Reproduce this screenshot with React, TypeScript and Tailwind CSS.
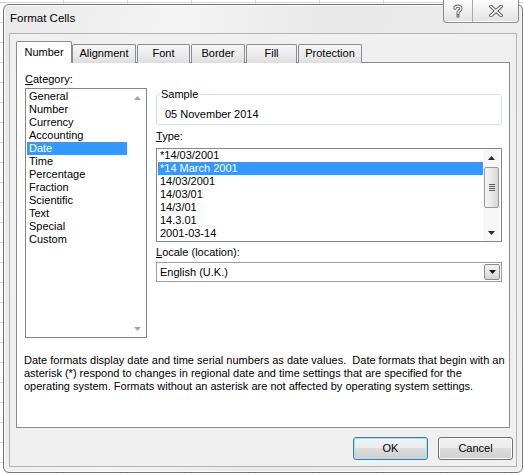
import React from "react";

// Win7 style "Format Cells" dialog
const categories = [
  "General",
  "Number",
  "Currency",
  "Accounting",
  "Date",
  "Time",
  "Percentage",
  "Fraction",
  "Scientific",
  "Text",
  "Special",
  "Custom",
];

const dateTypes = [
  "*14/03/2001",
  "*14 March 2001",
  "14/03/2001",
  "14/03/01",
  "14/3/01",
  "14.3.01",
  "2001-03-14",
];

const tabs = [
  { label: "Alignment", cls: "w-[64px] ml-0" },
  { label: "Font", cls: "w-[53px] ml-[1px]" },
  { label: "Border", cls: "w-[54px] ml-[1px]" },
  { label: "Fill", cls: "w-[51px] ml-[1px]" },
  { label: "Protection", cls: "w-[64px] ml-[1px]" },
];

function Arrow({ up, color }: { up?: boolean; color: string }) {
  return (
    <svg width="7" height="4" viewBox="0 0 7 4">
      {up ? (
        <path d="M3.5 0 L7 4 L0 4 Z" fill={color} />
      ) : (
        <path d="M0 0 L7 0 L3.5 4 Z" fill={color} />
      )}
    </svg>
  );
}

function CaptionButtons() {
  return (
    <div className="absolute left-[439px] top-[-5px] flex h-[23px] w-[76px] rounded-b-[4px] border border-t-0 border-[#8c8c8c] bg-[linear-gradient(#fdfdfd,#ececec_60%,#e2e2e2)] shadow-[inset_0_-1px_0_#ffffff]">
      <div className="flex w-[29px] items-center justify-center border-r border-[#a9a9a9]">
        <svg width="10" height="14" viewBox="0 0 10 14">
          <path
            d="M2 4.2 C2 1.6 8 1.4 8 4.4 C8 6.6 5 6.6 5 8.8 L5 9.6"
            fill="none"
            stroke="#5a5a5a"
            strokeWidth="3.2"
            strokeLinecap="round"
          />
          <path
            d="M2 4.2 C2 1.6 8 1.4 8 4.4 C8 6.6 5 6.6 5 8.8 L5 9.6"
            fill="none"
            stroke="#ffffff"
            strokeWidth="1.4"
            strokeLinecap="round"
          />
          <circle cx="5" cy="12" r="1.7" fill="#5a5a5a" />
          <circle cx="5" cy="12" r="0.7" fill="#ffffff" />
        </svg>
      </div>
      <div className="flex flex-1 items-center justify-center">
        <svg width="14" height="12" viewBox="0 0 14 12">
          <path d="M2 1.5 L12 10.5 M12 1.5 L2 10.5" stroke="#5a5a5a" strokeWidth="3.6" strokeLinecap="square" />
          <path d="M2 1.5 L12 10.5 M12 1.5 L2 10.5" stroke="#ffffff" strokeWidth="1.6" strokeLinecap="square" />
        </svg>
      </div>
    </div>
  );
}

export default function App() {
  return (
    <div className="relative h-[474px] w-[523px] overflow-hidden bg-white bg-[linear-gradient(to_right,#d6d6d6_1px,transparent_1px),linear-gradient(to_bottom,#d6d6d6_1px,transparent_1px)] bg-[length:64px_20px] bg-[position:63px_2px] font-['Liberation_Sans',Arial,sans-serif] text-[11px] text-black">
      {/* dialog window */}
      <div className="absolute left-[3px] top-[4px] h-[469px] w-[520px] rounded-[6px] border border-[#737373] bg-[linear-gradient(100deg,#e9e9e9,#f4f4f4_30%,#e8e8e8_55%,#efefef)] shadow-[inset_0_0_0_1px_#fafafa]">
        <CaptionButtons />

        {/* title bar */}
        <div className="h-[28px] pl-[6px] pt-[6px] text-[11.5px] leading-[14px]">Format Cells</div>

        {/* client area */}
        <div className="mx-[5px] h-[434px] border border-[#b4b4b4] bg-[#f0f0f0]">
          {/* tabs */}
          <div className="mb-[-1px] mt-[7px] flex h-[22px] items-end pl-[6px]">
            <div className="relative z-10 flex h-[22px] w-[56px] items-center justify-center rounded-t-[2px] border border-b-0 border-[#898c95] bg-white pb-[1px]">
              Number
            </div>
            {tabs.map((t) => (
              <div
                key={t.label}
                className={`flex h-[19px] items-center justify-center rounded-t-[2px] border border-b-0 border-[#898c95] bg-[linear-gradient(#f6f6f6,#ececec_50%,#dedede)] pb-[1px] ${t.cls}`}
              >
                {t.label}
              </div>
            ))}
          </div>

          {/* tab page */}
          <div className="ml-[6px] h-[366px] w-[494px] border border-[#898c95] bg-white pl-[8px] pt-[8px]">
            <div className="flex">
              {/* category */}
              <div className="w-[122px]">
                <div className="h-[17px] leading-[17px]">
                  <span className="underline">C</span>ategory:
                </div>
                <div className="flex h-[250px] border border-[#828790]">
                  <div className="w-[101px] pl-[1px] pt-[1px]">
                    {categories.map((c) => (
                      <div
                        key={c}
                        className={`h-[13px] px-[2px] leading-[13px] ${c === "Date" ? "bg-[#3399ff] text-white" : ""}`}
                      >
                        {c}
                      </div>
                    ))}
                  </div>
                  <div className="ml-[1px] flex flex-1 flex-col justify-between">
                    <div className="flex h-[17px] items-center justify-center">
                      <Arrow up color="#a3a3a3" />
                    </div>
                    <div className="flex h-[17px] items-center justify-center">
                      <Arrow color="#a3a3a3" />
                    </div>
                  </div>
                </div>
              </div>

              {/* right column */}
              <div className="ml-[9px] w-[346px] pt-[17px]">
                <fieldset className="rounded-[3px] border border-[#d5dfe5] pb-[3px] pl-[3px]">
                  <legend className="px-[1px] leading-[13px]">Sample</legend>
                  <div className="ml-[5px] mt-[7px] leading-[13px]">05 November 2014</div>
                </fieldset>

                <div className="h-[23px] leading-[23px]">
                  <span className="underline">T</span>ype:
                </div>
                <div className="flex h-[94px] border border-[#828790]">
                  <div className="w-[326px] pl-[1px]">
                    {dateTypes.map((d) => (
                      <div
                        key={d}
                        className={`h-[13px] px-[2px] leading-[13px] ${d === "*14 March 2001" ? "bg-[#3399ff] text-white" : ""}`}
                      >
                        {d}
                      </div>
                    ))}
                  </div>
                  <div className="flex w-[17px] flex-col bg-[#f7f7f7]">
                    <div className="flex h-[17px] items-center justify-center">
                      <Arrow up color="#2b2b2b" />
                    </div>
                    <div className="mx-[1px] mt-[1px] flex h-[41px] flex-col items-center justify-center gap-[1px] rounded-[2px] border border-[#9a9a9a] bg-[linear-gradient(to_right,#f4f4f4,#e9e9e9_50%,#d6d6d6)]">
                      <div className="h-px w-[6px] bg-[#5b5b5b]" />
                      <div className="h-px w-[6px] bg-[#5b5b5b]" />
                      <div className="h-px w-[6px] bg-[#5b5b5b]" />
                      <div className="h-px w-[6px] bg-[#5b5b5b]" />
                    </div>
                    <div className="flex-1" />
                    <div className="flex h-[17px] items-center justify-center">
                      <Arrow color="#2b2b2b" />
                    </div>
                  </div>
                </div>

                <div className="h-[20px] leading-[21px]">
                  <span className="underline">L</span>ocale (location):
                </div>
                <div className="flex h-[20px] items-center border border-[#9ba1a9] bg-white">
                  <div className="flex-1 pl-[3px]">English (U.K.)</div>
                  <div className="mr-[1px] flex h-[16px] w-[16px] items-center justify-center rounded-[2px] border border-[#8e8e8e] bg-[linear-gradient(#f4f4f4,#e6e6e6_50%,#d4d4d4)]">
                    <Arrow color="#1a1a1a" />
                  </div>
                </div>
              </div>
            </div>

            <p className="ml-[-1px] mt-[16px] whitespace-nowrap leading-[13px]">
              Date formats display date and time serial numbers as date values.&nbsp; Date formats that begin with an
              <br />
              asterisk (*) respond to changes in regional date and time settings that are specified for the
              <br />
              operating system. Formats without an asterisk are not affected by operating system settings.
            </p>
          </div>

          {/* buttons */}
          <div className="mt-[9px] flex justify-end gap-[10px] pr-[3px]">
            <button className="h-[23px] w-[75px] rounded-[3px] border border-[#3c7fb1] bg-[linear-gradient(#f2f2f2,#ebebeb_50%,#dddddd_50%,#cfcfcf)] shadow-[inset_0_0_0_1px_#9fe3f8]">
              OK
            </button>
            <button className="h-[23px] w-[75px] rounded-[3px] border border-[#707070] bg-[linear-gradient(#f2f2f2,#ebebeb_50%,#dddddd_50%,#cfcfcf)] shadow-[inset_0_0_0_1px_#fbfbfb]">
              Cancel
            </button>
          </div>
        </div>
      </div>
    </div>
  );
}
